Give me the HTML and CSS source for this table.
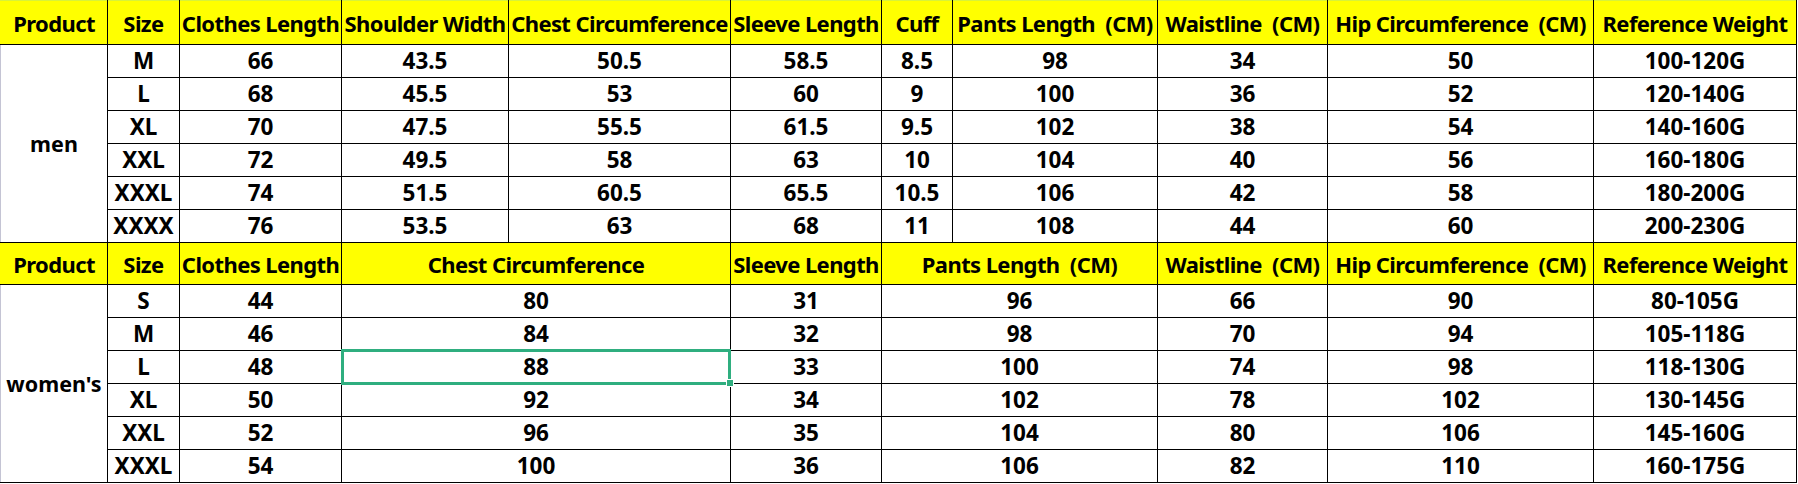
FILE: index.html
```html
<!DOCTYPE html>
<html>
<head>
<meta charset="utf-8">
<link rel="stylesheet" href="styles.css">
</head>
<body>
<table class="size-chart">
  <colgroup>
    <col class="c-product"><col class="c-size"><col class="c-clothes"><col class="c-shoulder"><col class="c-chest"><col class="c-sleeve"><col class="c-cuff"><col class="c-pants"><col class="c-waist"><col class="c-hip"><col class="c-weight">
  </colgroup>
  <tbody class="men">
    <tr class="head head-first">
      <th>Product</th><th>Size</th><th>Clothes Length</th><th>Shoulder Width</th><th>Chest Circumference</th><th>Sleeve Length</th><th>Cuff</th><th>Pants Length&nbsp; (CM)</th><th>Waistline&nbsp; (CM)</th><th>Hip Circumference&nbsp; (CM)</th><th>Reference Weight</th>
    </tr>
    <tr><td class="group" rowspan="6">men</td><td>M</td><td>66</td><td>43.5</td><td>50.5</td><td>58.5</td><td>8.5</td><td>98</td><td>34</td><td>50</td><td>100-120G</td></tr>
    <tr><td>L</td><td>68</td><td>45.5</td><td>53</td><td>60</td><td>9</td><td>100</td><td>36</td><td>52</td><td>120-140G</td></tr>
    <tr><td>XL</td><td>70</td><td>47.5</td><td>55.5</td><td>61.5</td><td>9.5</td><td>102</td><td>38</td><td>54</td><td>140-160G</td></tr>
    <tr><td>XXL</td><td>72</td><td>49.5</td><td>58</td><td>63</td><td>10</td><td>104</td><td>40</td><td>56</td><td>160-180G</td></tr>
    <tr><td>XXXL</td><td>74</td><td>51.5</td><td>60.5</td><td>65.5</td><td>10.5</td><td>106</td><td>42</td><td>58</td><td>180-200G</td></tr>
    <tr><td>XXXX</td><td>76</td><td>53.5</td><td>63</td><td>68</td><td>11</td><td>108</td><td>44</td><td>60</td><td>200-230G</td></tr>
  </tbody>
  <tbody class="women">
    <tr class="head head-second">
      <th>Product</th><th>Size</th><th>Clothes Length</th><th colspan="2">Chest Circumference</th><th>Sleeve Length</th><th colspan="2">Pants Length&nbsp; (CM)</th><th>Waistline&nbsp; (CM)</th><th>Hip Circumference&nbsp; (CM)</th><th>Reference Weight</th>
    </tr>
    <tr><td class="group" rowspan="6">women's</td><td>S</td><td>44</td><td colspan="2">80</td><td>31</td><td colspan="2">96</td><td>66</td><td>90</td><td>80-105G</td></tr>
    <tr><td>M</td><td>46</td><td colspan="2">84</td><td>32</td><td colspan="2">98</td><td>70</td><td>94</td><td>105-118G</td></tr>
    <tr><td>L</td><td>48</td><td colspan="2" class="selected">88</td><td>33</td><td colspan="2">100</td><td>74</td><td>98</td><td>118-130G</td></tr>
    <tr><td>XL</td><td>50</td><td colspan="2">92</td><td>34</td><td colspan="2">102</td><td>78</td><td>102</td><td>130-145G</td></tr>
    <tr><td>XXL</td><td>52</td><td colspan="2">96</td><td>35</td><td colspan="2">104</td><td>80</td><td>106</td><td>145-160G</td></tr>
    <tr><td>XXXL</td><td>54</td><td colspan="2">100</td><td>36</td><td colspan="2">106</td><td>82</td><td>110</td><td>160-175G</td></tr>
  </tbody>
</table>
</body>
</html>
```

FILE: styles.css
```css
html, body {
  margin: 0;
  padding: 0;
  background: #ffffff;
}

.size-chart {
  border-collapse: collapse;
  table-layout: fixed;
  width: 1796px;
  font-family: "Noto Sans", "Noto Sans CJK SC", sans-serif;
  font-weight: 700;
  font-size: 22.5px;
  color: #000;
}

.c-product { width: 107px; }
.c-size { width: 72px; }
.c-clothes { width: 162px; }
.c-shoulder { width: 167px; }
.c-chest { width: 222px; }
.c-sleeve { width: 151px; }
.c-cuff { width: 71px; }
.c-pants { width: 205px; }
.c-waist { width: 170px; }
.c-hip { width: 266px; }
.c-weight { width: 203px; }

.size-chart th,
.size-chart td {
  border: 1px solid #000;
  padding: 0;
  text-align: center;
  vertical-align: middle;
  white-space: nowrap;
  overflow: visible;
  line-height: 1;
}

.size-chart th {
  background: #ffff00;
  font-weight: 700;
  font-size: 22px;
  letter-spacing: -0.6px;
}

.size-chart td.group {
  font-size: 21.5px;
}

.head-first th { height: 43px; border-top: 1px solid #d8f23a; }
.head-second th { height: 41px; }
.size-chart td { height: 32px; }

.size-chart tr > :first-child { border-left: 1px solid #c4c4d4; }
.size-chart tr.head > th:first-child { border-left-color: #ffff00; }

.selected {
  position: relative;
}

.selected::before {
  content: "";
  position: absolute;
  left: -1px;
  top: -2px;
  right: -1px;
  bottom: -2px;
  border: 3px solid #2fae7f;
}

.selected::after {
  content: "";
  position: absolute;
  right: -4px;
  bottom: -4px;
  width: 6px;
  height: 6px;
  background: #2fae7f;
  border: 1px solid #fff;
}
```
